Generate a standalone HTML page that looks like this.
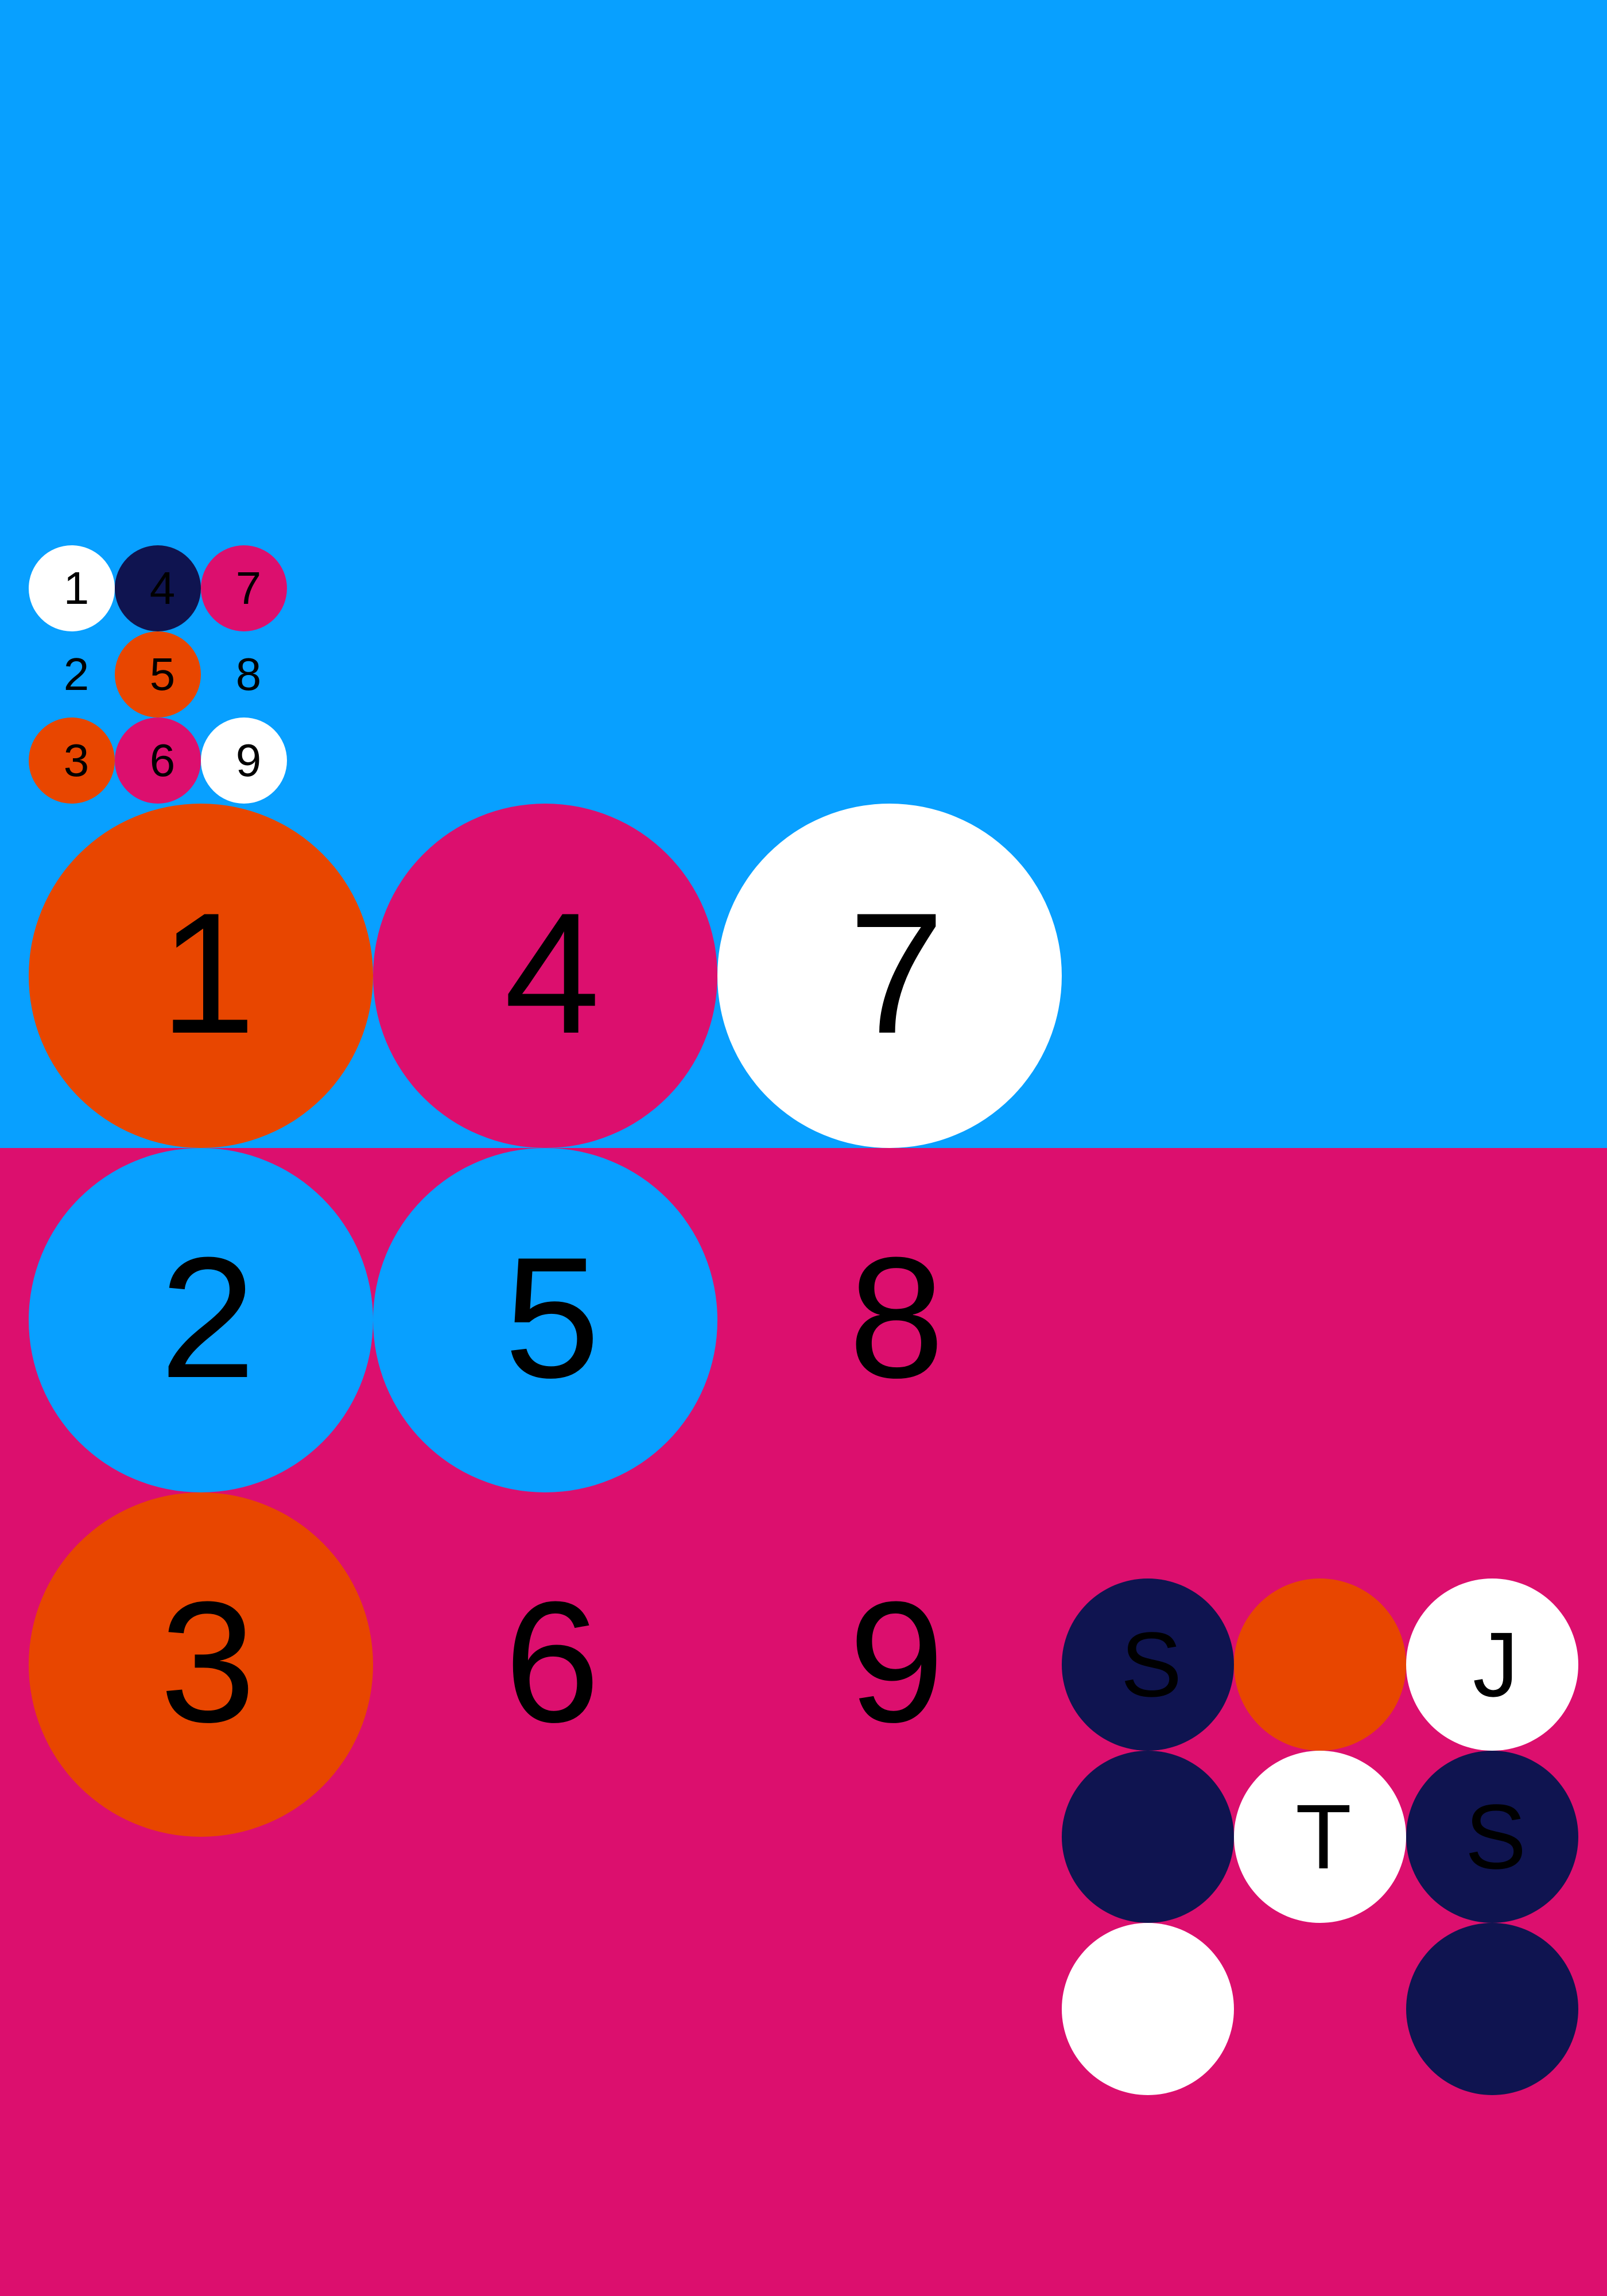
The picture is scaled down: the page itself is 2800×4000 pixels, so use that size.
<!DOCTYPE html>
<html><head><meta charset="utf-8"><style>
html,body{margin:0;padding:0}
body{width:2800px;height:4000px;position:relative;overflow:hidden;font-family:"Liberation Sans",Arial,sans-serif;background:#dc0f6e}
.top{position:absolute;left:0;top:0;width:2800px;height:2000px;background:#08a0ff}
.c{position:absolute;border-radius:50%;display:flex;align-items:center;justify-content:center;color:#000;line-height:1;box-sizing:border-box}
.s{width:150px;height:150px;font-size:80px;padding-left:16px}
.b{width:600px;height:600px;font-size:300px;padding-left:24px;padding-bottom:10px}
.r{width:300px;height:300px;font-size:160px;padding-left:12px}
.w{background:#fff}.n{background:#0f1450}.m{background:#dc0f6e}.o{background:#e84600}.bl{background:#08a0ff}
</style></head><body>
<div class="top"></div>
<div class="c s w" style="left:50px;top:950px">1</div>
<div class="c s" style="left:50px;top:1100px">2</div>
<div class="c s o" style="left:50px;top:1250px">3</div>
<div class="c s n" style="left:200px;top:950px">4</div>
<div class="c s o" style="left:200px;top:1100px">5</div>
<div class="c s m" style="left:200px;top:1250px">6</div>
<div class="c s m" style="left:350px;top:950px">7</div>
<div class="c s" style="left:350px;top:1100px">8</div>
<div class="c s w" style="left:350px;top:1250px">9</div>

<div class="c b o" style="left:50px;top:1400px">1</div>
<div class="c b bl" style="left:50px;top:2000px">2</div>
<div class="c b o" style="left:50px;top:2600px">3</div>
<div class="c b m" style="left:650px;top:1400px">4</div>
<div class="c b bl" style="left:650px;top:2000px">5</div>
<div class="c b" style="left:650px;top:2600px">6</div>
<div class="c b w" style="left:1250px;top:1400px">7</div>
<div class="c b" style="left:1250px;top:2000px">8</div>
<div class="c b" style="left:1250px;top:2600px">9</div>

<div class="c r n" style="left:1850px;top:2750px">S</div>
<div class="c r o" style="left:2150px;top:2750px"></div>
<div class="c r w" style="left:2450px;top:2750px">J</div>
<div class="c r n" style="left:1850px;top:3050px"></div>
<div class="c r w" style="left:2150px;top:3050px">T</div>
<div class="c r n" style="left:2450px;top:3050px">S</div>
<div class="c r w" style="left:1850px;top:3350px"></div>
<div class="c r n" style="left:2450px;top:3350px"></div>
</body></html>
